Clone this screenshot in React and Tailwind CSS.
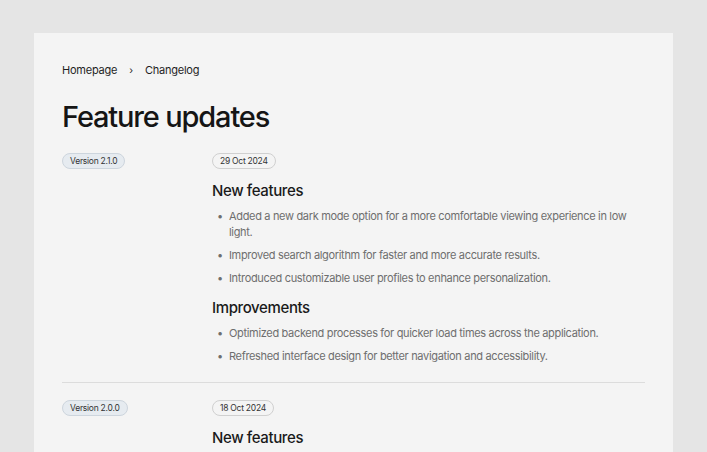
export default function App() {
  const releases = [
    {
      version: "Version 2.1.0",
      date: "29 Oct 2024",
      groups: [
        {
          title: "New features",
          items: [
            "Added a new dark mode option for a more comfortable viewing experience in low light.",
            "Improved search algorithm for faster and more accurate results.",
            "Introduced customizable user profiles to enhance personalization.",
          ],
        },
        {
          title: "Improvements",
          items: [
            "Optimized backend processes for quicker load times across the application.",
            "Refreshed interface design for better navigation and accessibility.",
          ],
        },
      ],
    },
    {
      version: "Version 2.0.0",
      date: "18 Oct 2024",
      groups: [
        {
          title: "New features",
          items: [
            "Launched real-time collaboration so teams can edit documents together.",
            "Added keyboard shortcuts for the most common actions.",
          ],
        },
      ],
    },
  ];

  return (
    <div
      className="min-h-screen bg-[#e5e5e5] pt-[33px] px-[34px]"
      style={{ fontFamily: "Inter, 'Noto Sans', sans-serif" }}
    >
      <div className="bg-[#f4f4f4] px-[28px] pt-[29px] pb-10">
        {/* Breadcrumb */}
        <nav className="flex items-center gap-[12px] text-[11px] leading-4 tracking-[-0.02em] text-[#1f1f1f]">
          <span>Homepage</span>
          <span className="text-[10px]">›</span>
          <span>Changelog</span>
        </nav>

        <h1 className="mt-[22px] text-[29px] leading-[34px] font-medium tracking-[-0.04em] text-[#151515]">
          Feature updates
        </h1>

        <div className="mt-[19px]">
          {releases.map((r, i) => (
            <div key={r.version}>
              {i > 0 && <div className="h-px bg-[#dcdcdc] mt-[18px] mb-[17px]" />}
              <div className="grid grid-cols-[150px_1fr]">
                <div className="flex items-start">
                  <span className="flex items-center h-4 px-[7px] rounded-full border border-[#cdd5dd] bg-[#e6ebf0] text-[8.5px] leading-none text-[#333] tracking-[-0.03em]">
                    {r.version}
                  </span>
                </div>
                <div>
                  <div className="flex">
                    <span className="flex items-center h-4 px-[7px] rounded-full border border-[#d0d0d0] text-[8.5px] leading-none text-[#333] tracking-[-0.03em]">
                      {r.date}
                    </span>
                  </div>
                  {r.groups.map((g) => (
                    <div key={g.title} className="mt-3">
                      <h2 className="text-[15px] leading-5 font-medium tracking-[-0.025em] text-[#1a1a1a]">
                        {g.title}
                      </h2>
                      <ul className="mt-[7px] flex flex-col gap-[7px] pr-4">
                        {g.items.map((t) => (
                          <li key={t} className="flex gap-[6px] text-[11px] leading-4 text-[#6e6e6e] tracking-[-0.03em]">
                            <span className="w-[11px] pl-[5px] shrink-0">•</span>
                            <span>{t}</span>
                          </li>
                        ))}
                      </ul>
                    </div>
                  ))}
                </div>
              </div>
            </div>
          ))}
        </div>
      </div>
    </div>
  );
}
